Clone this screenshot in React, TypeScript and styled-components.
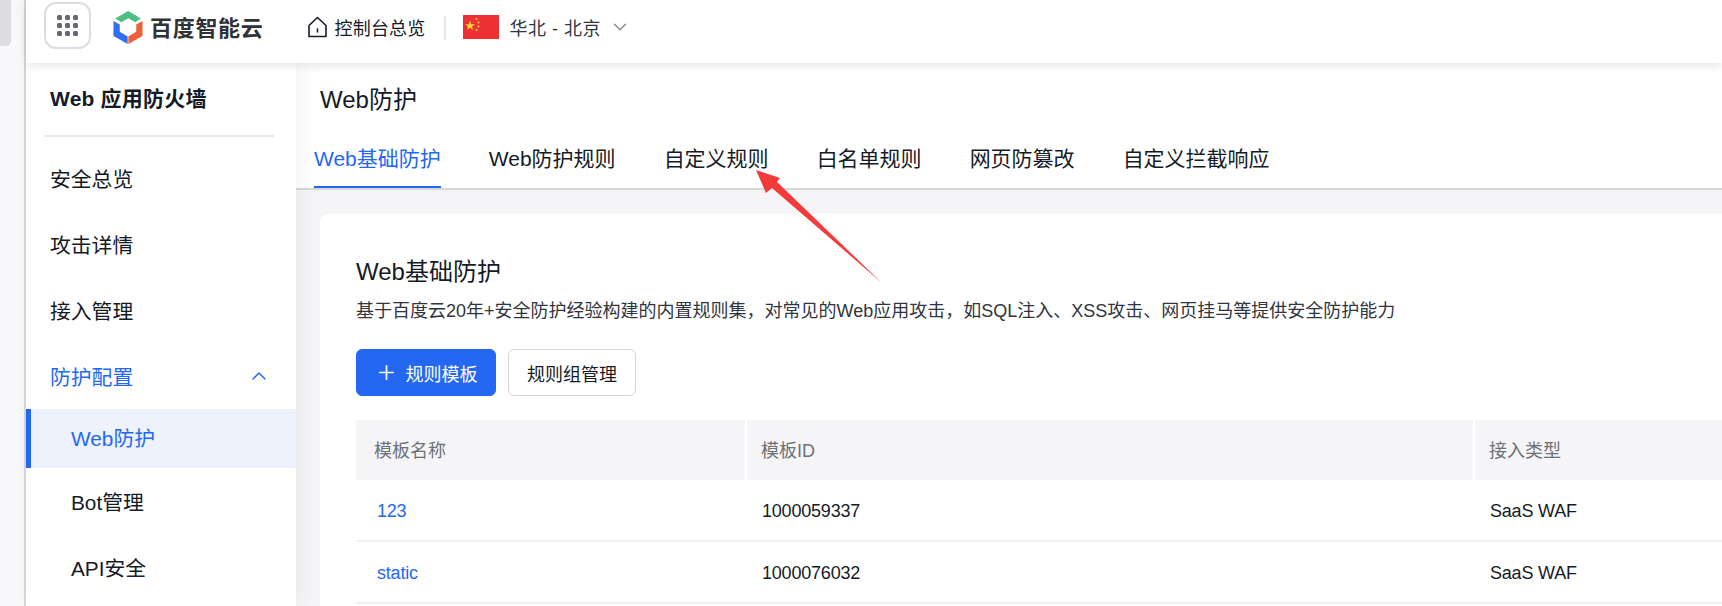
import React from 'react';
import styled, { createGlobalStyle } from 'styled-components';
import { ChevronDown, ChevronUp, Plus } from 'lucide-react';

const BLUE = '#2468f2';
const INK = '#151b26';

const GlobalStyle = createGlobalStyle`
  html, body {
    margin: 0;
    padding: 0;
    height: 606px;
    overflow: hidden;
    background: #fff;
    font-family: "Liberation Sans", "Noto Sans CJK SC", sans-serif;
    color: ${INK};
  }
  * { box-sizing: border-box; }
`;

// --- Layout ---
const Page = styled.div`
  position: relative;
  display: flex;
  width: 1722px;
  height: 606px;
  overflow: hidden;
`;

const OuterRail = styled.div`
  flex: 0 0 26px;
  background: #f8f8fa;
  border-right: 2px solid #d5d6d9;
`;

const RailThumb = styled.div`
  width: 11px;
  height: 46px;
  background: #dcdde2;
  border-radius: 0 0 5px 0;
`;

const Shell = styled.div`
  flex: 1;
  display: flex;
  flex-direction: column;
  min-width: 0;
`;

const TopBar = styled.header`
  position: relative;
  z-index: 3;
  flex: 0 0 63px;
  display: flex;
  align-items: flex-start;
  padding: 2px 0 0 18px;
  background: #fff;
  box-shadow: 0 2px 10px rgba(0, 0, 0, 0.12);
`;

const AppsButton = styled.div`
  width: 47px;
  height: 47px;
  display: grid;
  grid-template-columns: repeat(3, 5px);
  gap: 3px;
  place-content: center;
  border: 2px solid #dcdde0;
  border-radius: 12px;
`;

const AppsDot = styled.span`
  width: 5px;
  height: 5px;
  border-radius: 1.5px;
  background: #65686f;
`;

const LogoWrap = styled.div`
  display: flex;
  align-items: center;
  gap: 7px;
  height: 50px;
  margin-left: 22px;
`;

const LogoText = styled.span`
  font-family: "Noto Sans CJK SC", sans-serif;
  font-size: 22px;
  line-height: 26px;
  font-weight: 700;
  letter-spacing: 0.7px;
  color: #303236;
  padding-bottom: 3px;
`;

const HomeLink = styled.div`
  display: flex;
  align-items: center;
  gap: 8px;
  height: 50px;
  margin-left: 44px;
  font-size: 18px;
  letter-spacing: 0.2px;
`;

const BarDivider = styled.span`
  width: 2px;
  height: 24px;
  margin: 14px 17px 0 18px;
  background: #e6e7ea;
`;

const RegionPicker = styled.div`
  display: flex;
  align-items: center;
  height: 50px;
  font-size: 18px;
  color: #303540;
`;

const RegionLabel = styled.span`
  margin: 0 8px 0 11px;
  letter-spacing: 0.5px;
`;

const Body = styled.div`
  flex: 1;
  display: flex;
  min-height: 0;
`;

// --- Sidebar ---
const Sidebar = styled.aside`
  position: relative;
  z-index: 2;
  flex: 0 0 270px;
  background: #fff;
  box-shadow: 6px 0 18px rgba(20, 30, 60, 0.05);
`;

const SideTitle = styled.div`
  height: 74px;
  margin: 0 22px 0 19px;
  padding: 22px 0 0 5px;
  border-bottom: 2px solid #e6e8eb;
  font-size: 21px;
  line-height: 28px;
  font-weight: 700;
  letter-spacing: 0.2px;
`;

const SideItems = styled.nav`
  padding-top: 8px;
`;

const SideItem = styled.div<{ $open?: boolean }>`
  display: flex;
  align-items: center;
  justify-content: space-between;
  height: 66px;
  padding: 0 25px 0 24px;
  font-size: 20.8px;
  color: ${p => (p.$open ? BLUE : INK)};
`;

const SubItem = styled.div<{ $active?: boolean }>`
  display: flex;
  align-items: center;
  height: ${p => (p.$active ? '59px' : '66px')};
  padding: 0 0 ${p => (p.$active ? '4px' : '0')} ${p => (p.$active ? '40px' : '45px')};
  font-size: 20.8px;
  color: ${p => (p.$active ? BLUE : INK)};
  background: ${p => (p.$active ? '#eef2fc' : 'transparent')};
  border-left: ${p => (p.$active ? `5px solid ${BLUE}` : '0')};
`;

// --- Main column ---
const Main = styled.main`
  flex: 1;
  min-width: 0;
  display: flex;
  flex-direction: column;
  background: #f5f5f7;
`;

const PageHead = styled.div`
  flex: 0 0 127px;
  padding: 21px 0 0 18px;
  background: #fff;
  border-bottom: 2px solid #d6d7da;
`;

const PageTitle = styled.h1`
  margin: 0 0 0 6px;
  font-size: 24px;
  line-height: 32px;
  font-weight: 400;
`;

const Tabs = styled.div`
  display: flex;
  gap: 48px;
  margin-top: 21px;
`;

const Tab = styled.div<{ $active?: boolean }>`
  height: 51px;
  padding-top: 7px;
  font-size: 21px;
  line-height: 30px;
  white-space: nowrap;
  color: ${p => (p.$active ? BLUE : INK)};
  border-bottom: ${p => (p.$active ? `2px solid ${BLUE}` : '0')};
`;

const Card = styled.section`
  flex: 1;
  margin: 24px 0 0 24px;
  padding: 40px 0 0 36px;
  background: #fff;
  border-radius: 8px 0 0 0;
`;

const CardTitle = styled.h2`
  margin: 0;
  font-size: 24px;
  line-height: 36px;
  font-weight: 400;
`;

const CardDesc = styled.p`
  margin: 9px 0 0;
  font-size: 18px;
  line-height: 24px;
  color: #303540;
`;

const Actions = styled.div`
  display: flex;
  gap: 12px;
  margin-top: 26px;
`;

const Button = styled.button<{ $primary?: boolean }>`
  display: flex;
  align-items: center;
  justify-content: center;
  gap: 8px;
  height: 47px;
  padding: 0;
  width: ${p => (p.$primary ? '140px' : '128px')};
  font-family: inherit;
  font-size: 18px;
  color: ${p => (p.$primary ? '#fff' : INK)};
  background: ${p => (p.$primary ? BLUE : '#fff')};
  border: 1px solid ${p => (p.$primary ? BLUE : '#d4d6d9')};
  border-radius: 6px;
`;

const Table = styled.div`
  margin-top: 24px;
`;

const TableRow = styled.div<{ $head?: boolean }>`
  display: grid;
  grid-template-columns: 389px 728px 1fr;
  align-items: center;
  height: ${p => (p.$head ? '60px' : '62px')};
  background: ${p => (p.$head ? '#f5f5f7' : '#fff')};
  border-bottom: ${p => (p.$head ? '0' : '2px solid #eef0f3')};
`;

const HeadCell = styled.div`
  height: 100%;
  display: flex;
  align-items: center;
  padding: 0 0 3px 18px;
  font-size: 18px;
  color: #6e7178;
  & + & {
    border-left: 2px solid #fff;
    padding-left: 14px;
  }
`;

const Cell = styled.div`
  padding: 3px 0 0 17px;
  font-size: 18px;
  letter-spacing: -0.2px;
  color: ${INK};
`;

const LinkCell = styled(Cell)`
  padding-left: 21px;
  color: ${BLUE};
`;

const ArrowOverlay = styled.svg`
  position: absolute;
  left: 0;
  top: 0;
  z-index: 5;
  pointer-events: none;
`;

// --- Data ---
const tabs = ['Web基础防护', 'Web防护规则', '自定义规则', '白名单规则', '网页防篡改', '自定义拦截响应'];
const rows = [
  { name: '123', id: '1000059337', type: 'SaaS WAF' },
  { name: 'static', id: '1000076032', type: 'SaaS WAF' },
];

// --- Drawings ---
const LogoMark = () => (
  <svg width="30" height="33" viewBox="0 0 88 100">
    <path d="M5 23 45 0l38 23-17 11-21-12-21 12z" fill="#4fbf7f" />
    <path d="M0 30 19 41v22l24 14v23L0 76z" fill="#2f6ff0" />
    <path d="M88 30 69 41v22L45 77v23l43-24z" fill="#ee5f3c" />
  </svg>
);

const HomeIcon = () => (
  <svg width="19" height="22" viewBox="0 0 19 22" fill="none" stroke="#151b26" strokeWidth="1.6">
    <path d="M1 9.5 9.5 1.5 18 9.5V20.5H1z" strokeLinejoin="round" />
    <path d="M9.5 13v3" strokeLinecap="round" />
  </svg>
);

const ChinaFlag = () => (
  <svg width="36" height="24" viewBox="0 0 36 24">
    <rect width="36" height="24" fill="#ee2f33" />
    <path d="M7 5.5 8.2 9.2H12L9 11.4 10.1 15 7 12.8 3.9 15 5 11.4 2 9.2H5.8z" fill="#ffd83a" />
    <circle cx="13.5" cy="4" r="1" fill="#ffd83a" />
    <circle cx="15.5" cy="7.5" r="1" fill="#ffd83a" />
    <circle cx="15.5" cy="11.5" r="1" fill="#ffd83a" />
    <circle cx="13.5" cy="15" r="1" fill="#ffd83a" />
  </svg>
);

// --- Main Component ---
const App: React.FC = () => (
  <Page>
    <GlobalStyle />
    <OuterRail>
      <RailThumb />
    </OuterRail>
    <Shell>
      <TopBar>
        <AppsButton>
          {Array.from({ length: 9 }, (_, i) => (
            <AppsDot key={i} />
          ))}
        </AppsButton>
        <LogoWrap>
          <LogoMark />
          <LogoText>百度智能云</LogoText>
        </LogoWrap>
        <HomeLink>
          <HomeIcon />
          控制台总览
        </HomeLink>
        <BarDivider />
        <RegionPicker>
          <ChinaFlag />
          <RegionLabel>华北 - 北京</RegionLabel>
          <ChevronDown size={22} color="#84868c" strokeWidth={1.4} />
        </RegionPicker>
      </TopBar>
      <Body>
        <Sidebar>
          <SideTitle>Web 应用防火墙</SideTitle>
          <SideItems>
            <SideItem>安全总览</SideItem>
            <SideItem>攻击详情</SideItem>
            <SideItem>接入管理</SideItem>
            <SideItem $open>
              防护配置
              <ChevronUp size={24} color={BLUE} strokeWidth={1.5} />
            </SideItem>
            <SubItem $active>Web防护</SubItem>
            <SubItem>Bot管理</SubItem>
            <SubItem>API安全</SubItem>
          </SideItems>
        </Sidebar>
        <Main>
          <PageHead>
            <PageTitle>Web防护</PageTitle>
            <Tabs>
              {tabs.map((t, i) => (
                <Tab key={t} $active={i === 0}>
                  {t}
                </Tab>
              ))}
            </Tabs>
          </PageHead>
          <Card>
            <CardTitle>Web基础防护</CardTitle>
            <CardDesc>
              基于百度云20年+安全防护经验构建的内置规则集，对常见的Web应用攻击，如SQL注入、XSS攻击、网页挂马等提供安全防护能力
            </CardDesc>
            <Actions>
              <Button $primary>
                <Plus size={23} strokeWidth={1.8} />
                规则模板
              </Button>
              <Button>规则组管理</Button>
            </Actions>
            <Table>
              <TableRow $head>
                <HeadCell>模板名称</HeadCell>
                <HeadCell>模板ID</HeadCell>
                <HeadCell>接入类型</HeadCell>
              </TableRow>
              {rows.map(r => (
                <TableRow key={r.name}>
                  <LinkCell>{r.name}</LinkCell>
                  <Cell>{r.id}</Cell>
                  <Cell>{r.type}</Cell>
                </TableRow>
              ))}
            </Table>
          </Card>
        </Main>
      </Body>
    </Shell>
    <ArrowOverlay width="1722" height="606" viewBox="0 0 1722 606">
      <path d="M756 170 780 178 777 182 882 283 772 188 766 193z" fill="#f43b3b" />
    </ArrowOverlay>
  </Page>
);

export default App;
